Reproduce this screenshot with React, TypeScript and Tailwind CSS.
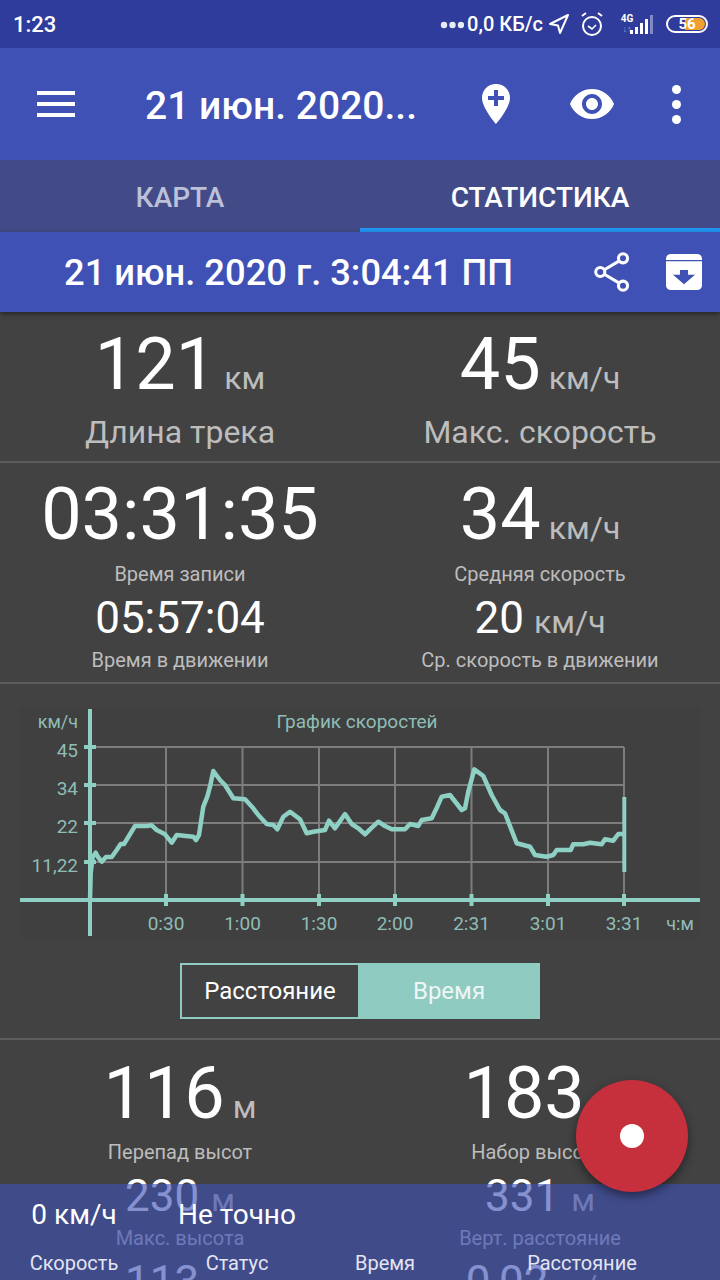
import { ReactNode } from "react";

// Точки графика скоростей (координаты экрана)
const SPEED = [
  [90, 900], [90.7, 873], [92.7, 857], [95.7, 852.7], [98, 857], [101.7, 861.7], [106, 857], [111.7, 857],
  [116.7, 850], [120.7, 844], [124, 844], [135, 826], [146.7, 826], [151.7, 825.3], [156.7, 830], [165, 834.3],
  [171.7, 842.7], [176.7, 835], [193.3, 836.7], [196, 840], [199, 835], [203.3, 806.7], [207.3, 796.7], [210, 786.7],
  [213.3, 771], [220, 780], [225, 785], [233.3, 798.3], [245, 799.3], [253.3, 808.3], [258.3, 815], [266.7, 824],
  [273.3, 825], [277.3, 829.3], [283.3, 816.7], [290, 811.7], [300, 819.3], [306.7, 833.3], [313.3, 831.7], [325, 830],
  [329, 820.7], [335, 828.3], [345, 814], [351.7, 824], [358.3, 828.3], [365, 834.3], [370, 829.3], [378.3, 821.7],
  [385, 826], [391.7, 829.3], [405, 829.3], [410, 824], [418.3, 826], [421.7, 820], [431.7, 818.3], [437.3, 806.7],
  [441.7, 796.7], [450, 795], [461.7, 810], [465, 808.3], [468.3, 791.7], [474.3, 769.3], [483.3, 776], [491.7, 795],
  [500, 810], [505, 813.3], [516.7, 843.3], [530, 846.7], [535, 855], [546.7, 856.7], [553.3, 855], [556.7, 850],
  [570.7, 850], [573.3, 844.3], [583.3, 844.3], [590, 842.7], [601.7, 844.3], [605, 839.3], [613.3, 840.7], [618.3, 834],
  [624.3, 834],
];

const GRID_X = [166, 242.5, 319, 395, 471.5, 548, 624];
const GRID_Y = [747, 785, 823, 862];
const X_LABELS = ["0:30", "1:00", "1:30", "2:00", "2:31", "3:01", "3:31"];
const Y_LABELS = ["45", "34", "22", "11,22"];

function SpeedChart() {
  const teal = "#8fd0c4";
  const labelColor = "#8fbdb5";
  return (
    <svg viewBox="20 708 680 230" className="mx-auto mt-[24px] block h-[230px] w-[680px] bg-[#404040]">
      {GRID_Y.map((y) => (
        <line key={y} x1={90} x2={624} y1={y} y2={y} stroke="#7d7d7d" strokeWidth={2} />
      ))}
      {GRID_X.map((x) => (
        <line key={x} x1={x} x2={x} y1={747} y2={900} stroke="#7d7d7d" strokeWidth={2} />
      ))}
      <polyline points={SPEED.map((p) => p.join(",")).join(" ")} fill="none" stroke={teal} strokeWidth={4.5} strokeLinejoin="round" />
      <line x1={624.3} x2={624.3} y1={797} y2={872} stroke={teal} strokeWidth={4} />
      <line x1={20} x2={700} y1={900} y2={900} stroke={teal} strokeWidth={4} />
      <line x1={90} x2={90} y1={709} y2={936} stroke={teal} strokeWidth={4} />
      {GRID_Y.map((y) => (
        <line key={y} x1={84} x2={96} y1={y} y2={y} stroke={teal} strokeWidth={4} />
      ))}
      {GRID_X.map((x) => (
        <line key={x} x1={x} x2={x} y1={894} y2={906} stroke={teal} strokeWidth={4} />
      ))}
      <g fill={labelColor} fontSize={19} fontFamily="Roboto, sans-serif">
        <text x={78} y={728} textAnchor="end" fontSize={18}>км/ч</text>
        <text x={357} y={728} textAnchor="middle">График скоростей</text>
        {Y_LABELS.map((t, i) => (
          <text key={t} x={78} y={GRID_Y[i] + 10} textAnchor="end">{t}</text>
        ))}
        {X_LABELS.map((t, i) => (
          <text key={t} x={GRID_X[i]} y={930} textAnchor="middle">{t}</text>
        ))}
        <text x={680} y={930} textAnchor="middle" fontSize={18}>ч:м</text>
      </g>
    </svg>
  );
}

function Value({ value, unit, big = "text-[72px]", gap = "ml-[8px]" }: { value: string; unit?: string; big?: string; gap?: string }) {
  return (
    <div className="flex items-baseline justify-center">
      <span className={`${big} leading-none text-white`}>{value}</span>
      {unit && <span className={`${gap} text-[32px] leading-none text-[#bdbdbd]`}>{unit}</span>}
    </div>
  );
}

function Label({ children, className = "" }: { children: ReactNode; className?: string }) {
  return <div className={`text-center text-[20px] leading-[24px] text-[#bdbdbd] ${className}`}>{children}</div>;
}

function StatusBar() {
  return (
    <div className="flex h-[48px] items-center bg-[#2f3c9b] pr-[12px] pl-[13px] text-white">
      <span className="text-[22px] font-medium">1:23</span>
      <div className="ml-auto flex items-center">
        <svg width="24" height="8" viewBox="0 0 24 8" fill="#e8eaf6" className="mt-[2px]">
          <circle cx="4" cy="4" r="3.2" />
          <circle cx="12.5" cy="4" r="3.2" />
          <circle cx="21" cy="4" r="3.2" />
        </svg>
        <span className="ml-[3px] text-[20px] font-medium">0,0 КБ/с</span>
        <svg width="22" height="22" viewBox="0 0 22 22" fill="none" stroke="white" strokeWidth="2" strokeLinejoin="round" className="ml-[5px]">
          <path d="M20 2 L2 11 L10 12.5 L12 20 Z" />
        </svg>
        <svg width="24" height="26" viewBox="0 0 24 26" fill="none" stroke="white" strokeWidth="2" className="ml-[10px]">
          <circle cx="12" cy="15" r="9" />
          <path d="M8 15 L12 18 L16 14" strokeWidth="1.6" />
          <path d="M2 5 L6 2 M22 5 L18 2" />
        </svg>
        <div className="ml-[17px] flex h-[20px] w-[34px] items-end">
          <div className="flex h-full w-[12px] flex-col items-center justify-between">
            <span className="text-[10px] leading-[10px] font-bold">4G</span>
            <span className="text-[9px] leading-[9px] text-white/50">↓↑</span>
          </div>
          <div className="ml-[-3px] flex items-end gap-[2px]">
            <div className="h-[4px] w-[3px] bg-white" />
            <div className="h-[7px] w-[3px] bg-white" />
            <div className="h-[11px] w-[3px] bg-white" />
            <div className="h-[15px] w-[3px] bg-white" />
            <div className="h-[19px] w-[3px] bg-white/40" />
          </div>
        </div>
        <div className="relative ml-[11px] flex h-[18px] w-[42px] items-center justify-center overflow-hidden rounded-full border-2 border-white">
          <div className="absolute top-[1px] right-[1px] bottom-[1px] w-[20px] rounded-r-full bg-[#f0a030]" />
          <span className="relative text-[15px] leading-none font-bold">56</span>
        </div>
      </div>
    </div>
  );
}

function Toolbar() {
  return (
    <div className="flex h-[112px] items-center bg-[#3f51b5] text-white">
      <div className="ml-[37px] flex w-[38px] flex-col gap-[7px]">
        <div className="h-[4px] bg-white" />
        <div className="h-[4px] bg-white" />
        <div className="h-[4px] bg-white" />
      </div>
      <div className="ml-[70px] w-[337px] pt-[4px] text-[39px] leading-none font-medium">21 июн. 2020...</div>
      <svg width="28" height="40" viewBox="0 0 28 40" fill="white">
        <path fillRule="evenodd" d="M14 0C6 0 0 6 0 14C0 24 14 40 14 40C14 40 28 24 28 14C28 6 22 0 14 0ZM12 6H16V12H22V16H16V22H12V16H6V12H12Z" />
      </svg>
      <svg width="48" height="48" viewBox="0 0 24 24" fill="white" className="ml-[58px]">
        <path d="M12 4.5C7 4.5 2.73 7.61 1 12c1.73 4.39 6 7.5 11 7.5s9.27-3.11 11-7.5c-1.73-4.39-6-7.5-11-7.5zM12 17c-2.76 0-5-2.24-5-5s2.24-5 5-5 5 2.24 5 5-2.24 5-5 5zm0-8c-1.66 0-3 1.34-3 3s1.34 3 3 3 3-1.34 3-3-1.34-3-3-3z" />
      </svg>
      <div className="ml-[56px] flex flex-col gap-[6px]">
        <div className="size-[9px] rounded-full bg-white" />
        <div className="size-[9px] rounded-full bg-white" />
        <div className="size-[9px] rounded-full bg-white" />
      </div>
    </div>
  );
}

function Tabs() {
  return (
    <div className="grid h-[72px] grid-cols-2 bg-[#424b87] text-[28px] font-medium">
      <div className="flex items-center justify-center pt-[4px] text-[#bcc0d9]">КАРТА</div>
      <div className="flex items-center justify-center border-b-4 border-[#2196f3] pt-[8px] text-white">СТАТИСТИКА</div>
    </div>
  );
}

function SubHeader() {
  return (
    <div className="relative z-10 flex h-[80px] items-center bg-[#3f51b5] pl-[64px] text-white shadow-[0_2px_5px_rgba(0,0,0,0.45)]">
      <span className="w-[529px] pt-[3px] text-[36.3px] leading-none font-medium whitespace-nowrap">21 июн. 2020 г. 3:04:41 ПП</span>
      <svg width="40" height="40" viewBox="0 0 44 44" fill="none" stroke="white" strokeWidth="3.4">
        <circle cx="33" cy="7" r="5" />
        <circle cx="8" cy="22" r="5" />
        <circle cx="33" cy="37" r="5" />
        <path d="M12.5 19.5 L28.5 10 M12.5 24.5 L28.5 34" />
      </svg>
      <svg width="36" height="36" viewBox="0 0 36 38" preserveAspectRatio="none" className="ml-[33px]">
        <path fill="white" d="M5 0H31C34 0 36 2 36 5V33C36 36 34 38 31 38H5C2 38 0 36 0 33V5C0 2 2 0 5 0Z" />
        <path stroke="#3f51b5" strokeWidth="1.5" d="M0 7H36" />
        <path fill="#3f51b5" d="M14 17H22V22H29L18 32L7 22H14Z" />
      </svg>
    </div>
  );
}

function Divider() {
  return <div className="h-[2px] bg-[#5c5c5c]" />;
}

function SegmentSwitch() {
  return (
    <div className="mx-auto mt-[25px] grid h-[56px] w-[360px] grid-cols-[176px_180px] border-2 border-[#90cbc1] text-[24px]">
      <div className="flex items-center justify-center text-white">Расстояние</div>
      <div className="flex items-center justify-center bg-[#90cbc1] pl-[2px] text-[#eef6f5]">Время</div>
    </div>
  );
}

function Stats() {
  return (
    <div className="flex-1 overflow-hidden bg-[#424242] pt-[17px] [&>*]:shrink-0">
      <div className="grid h-[132px] grid-cols-2">
        <div>
          <Value value="121" unit="км" />
          <div className="mt-[11px] text-center text-[32px] leading-[40px] text-[#bdbdbd]">Длина трека</div>
        </div>
        <div>
          <Value value="45" unit="км/ч" />
          <div className="mt-[11px] text-center text-[32px] leading-[40px] text-[#bdbdbd]">Макс. скорость</div>
        </div>
      </div>
      <Divider />
      <div className="grid h-[219px] grid-cols-2 pt-[16px]">
        <div>
          <Value value="03:31:35" />
          <Label className="mt-[11px]">Время записи</Label>
          <div className="mt-[10px]"><Value value="05:57:04" big="text-[44px]" /></div>
          <Label className="mt-[8px]">Время в движении</Label>
        </div>
        <div>
          <Value value="34" unit="км/ч" />
          <Label className="mt-[11px]">Средняя скорость</Label>
          <div className="mt-[10px]"><Value value="20" unit="км/ч" big="text-[44px]" gap="ml-[10px]" /></div>
          <Label className="mt-[8px]">Ср. скорость в движении</Label>
        </div>
      </div>
      <Divider />
      <SpeedChart />
      <SegmentSwitch />
      <div className="mt-[19px]"><Divider /></div>
      <div className="grid grid-cols-2 pt-[18px]">
        <div>
          <Value value="116" unit="м" />
          <Label className="mt-[10px]">Перепад высот</Label>
          <div className="mt-[10px]"><Value value="230" unit="м" big="text-[44px]" gap="ml-[12px]" /></div>
          <Label className="mt-[8px]">Макс. высота</Label>
          <div className="mt-[10px]"><Value value="113" unit="м" big="text-[44px]" gap="ml-[12px]" /></div>
        </div>
        <div>
          <Value value="183" unit="м" />
          <Label className="mt-[10px]">Набор высоты</Label>
          <div className="mt-[10px]"><Value value="331" unit="м" big="text-[44px]" gap="ml-[12px]" /></div>
          <Label className="mt-[8px]">Верт. расстояние</Label>
          <div className="mt-[10px]"><Value value="0,02" unit="м/с" big="text-[44px]" gap="ml-[12px]" /></div>
        </div>
      </div>
    </div>
  );
}

function BottomBar() {
  return (
    <div className="absolute inset-x-0 bottom-0 z-20 grid h-[96px] grid-cols-[148px_178px_118px_276px] content-start bg-[#3f51b5]/[.63] pt-[14px] text-center text-white">
      <div className="text-[28px] leading-[34px]">0 км/ч</div>
      <div className="text-[28px] leading-[34px]">Не точно</div>
      <div />
      <div />
      <div className="mt-[19px] text-[20px] leading-[24px] text-[#e3e5f3]">Скорость</div>
      <div className="mt-[19px] text-[20px] leading-[24px] text-[#e3e5f3]">Статус</div>
      <div className="mt-[19px] text-[20px] leading-[24px] text-[#e3e5f3]">Время</div>
      <div className="mt-[19px] text-[20px] leading-[24px] text-[#e3e5f3]">Расстояние</div>
    </div>
  );
}

export default function App() {
  return (
    <div className="relative flex h-[1280px] w-[720px] flex-col overflow-hidden bg-[#424242] [font-family:Roboto,sans-serif]">
      <StatusBar />
      <Toolbar />
      <Tabs />
      <SubHeader />
      <Stats />
      <BottomBar />
      {/* Кнопка записи */}
      <button className="absolute top-[1080px] left-[576px] z-30 flex size-[112px] items-center justify-center rounded-full bg-[#c62f3c] shadow-[0_4px_10px_rgba(0,0,0,0.45)]">
        <span className="size-[24px] rounded-full bg-white" />
      </button>
    </div>
  );
}
